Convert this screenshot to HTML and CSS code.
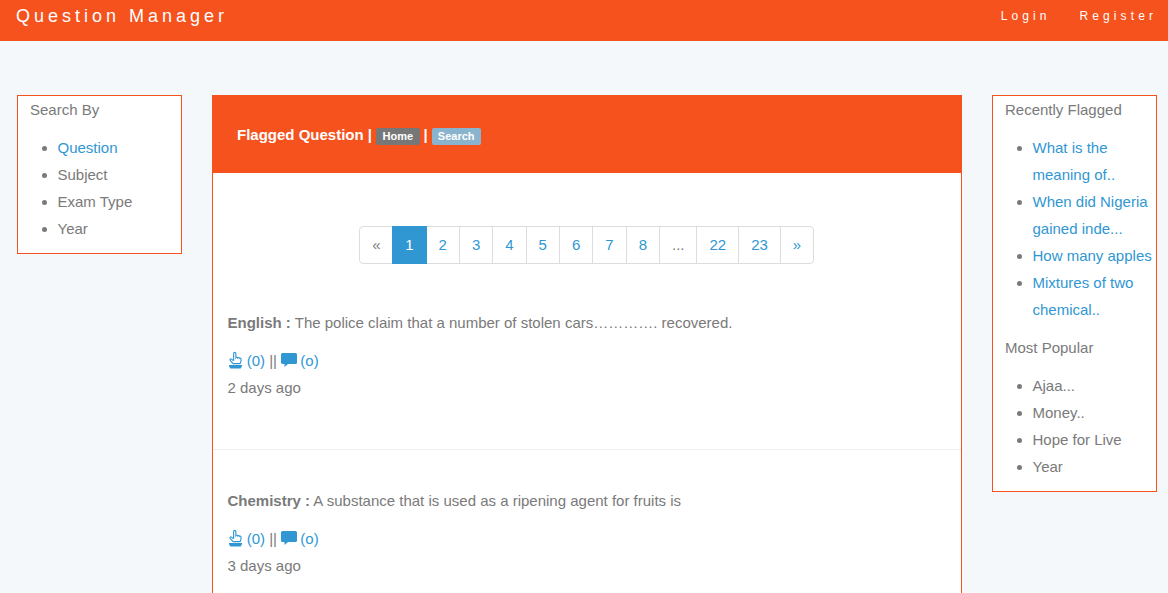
FILE: index.html
```html
<!DOCTYPE html>
<html lang="en">
<head>
<meta charset="utf-8">
<title>Question Manager</title>
<link rel="stylesheet" href="styles.css">
</head>
<body>
<header class="topbar">
  <a class="brand">Question Manager</a>
  <nav class="topnav"><a>Login</a><a>Register</a></nav>
</header>
<main class="layout">
  <aside class="box">
    <h4 class="box-title">Search By</h4>
    <ul class="box-list">
      <li><a>Question</a></li>
      <li>Subject</li>
      <li>Exam Type</li>
      <li>Year</li>
    </ul>
  </aside>
  <section class="panel">
    <div class="panel-head">
      <span class="panel-title">Flagged Question |</span>
      <span class="tag tag-home">Home</span>
      <span class="panel-title sep">|</span>
      <span class="tag tag-search">Search</span>
    </div>
    <div class="pager-row">
      <ul class="pager">
        <li class="muted">«</li><li class="active">1</li><li>2</li><li>3</li><li>4</li><li>5</li><li>6</li><li>7</li><li>8</li><li class="muted">...</li><li>22</li><li>23</li><li>»</li>
      </ul>
    </div>
    <article class="question">
      <p class="q-text"><b>English :</b> The police claim that a number of stolen cars…………. recovered.</p>
      <p class="q-meta">
        <svg class="ico-hand" viewBox="0 0 16 18"><path d="M6 9.500V2a1.200 1.200 0 0 1 2.400 0v4.600c.6-.8 1.800-.6 2 .2.6-.7 1.700-.4 1.900.4.700-.4 1.600 0 1.600 1v2l-1 2.600H5.500L2.300 9.400c-.8-1 .5-2.100 1.500-1.300L6 10" fill="none" stroke="currentColor" stroke-width="1.200"/><path d="M1 14.200h14v1.200L13.500 18h-11L1 15.400z" fill="currentColor"/></svg>
        <a>(0)</a> <span class="bars">||</span>
        <svg class="ico-chat" viewBox="0 0 16 14"><path d="M1.500 0h13A1.500 1.500 0 0 1 16 1.500v8a1.500 1.500 0 0 1-1.500 1.500H7L3.500 14V11h-2A1.500 1.500 0 0 1 0 9.500v-8A1.500 1.500 0 0 1 1.500 0z" fill="currentColor"/></svg>
        <a>(o)</a>
      </p>
      <p class="q-time">2 days ago</p>
    </article>
    <article class="question">
      <p class="q-text"><b>Chemistry :</b> A substance that is used as a ripening agent for fruits is</p>
      <p class="q-meta">
        <svg class="ico-hand" viewBox="0 0 16 18"><path d="M6 9.500V2a1.200 1.200 0 0 1 2.400 0v4.600c.6-.8 1.800-.6 2 .2.6-.7 1.700-.4 1.900.4.700-.4 1.600 0 1.600 1v2l-1 2.600H5.500L2.300 9.400c-.8-1 .5-2.100 1.500-1.300L6 10" fill="none" stroke="currentColor" stroke-width="1.200"/><path d="M1 14.200h14v1.200L13.500 18h-11L1 15.400z" fill="currentColor"/></svg>
        <a>(0)</a> <span class="bars">||</span>
        <svg class="ico-chat" viewBox="0 0 16 14"><path d="M1.500 0h13A1.500 1.500 0 0 1 16 1.500v8a1.500 1.500 0 0 1-1.500 1.500H7L3.500 14V11h-2A1.500 1.500 0 0 1 0 9.500v-8A1.500 1.500 0 0 1 1.500 0z" fill="currentColor"/></svg>
        <a>(o)</a>
      </p>
      <p class="q-time">3 days ago</p>
    </article>
  </section>
  <aside class="box">
    <h4 class="box-title">Recently Flagged</h4>
    <ul class="box-list">
      <li><a>What is the meaning of..</a></li>
      <li><a>When did Nigeria gained inde...</a></li>
      <li><a>How many apples</a></li>
      <li><a>Mixtures of two chemical..</a></li>
    </ul>
    <h4 class="box-title">Most Popular</h4>
    <ul class="box-list">
      <li>Ajaa...</li>
      <li>Money..</li>
      <li>Hope for Live</li>
      <li>Year</li>
    </ul>
  </aside>
</main>
</body>
</html>
```
FILE: styles.css
```css
* { box-sizing: border-box; }
html, body { height: 100%; overflow: hidden; }
body {
  margin: 0;
  background: #f5f8fa;
  color: #7a7a7a;
  font: 15px/27px "Liberation Sans", Arial, sans-serif;
}
a { color: #3097d3; }
.topbar {
  height: 41px;
  background: #f6521e;
  color: #fff;
  display: flex;
  justify-content: space-between;
  padding: 0 11px 0 16px;
}
.brand {
  color: #fff;
  font-size: 18px;
  line-height: 32px;
  letter-spacing: 4px;
}
.topnav {
  display: flex;
  gap: 29px;
  font-size: 12px;
  line-height: 32px;
  letter-spacing: 4.100px;
}
.topnav a { color: #fff; }
.layout {
  display: flex;
  align-items: flex-start;
  gap: 30px;
  padding: 54px 11px 0 17px;
}
.box {
  flex: 0 0 165px;
  width: 165px;
  background: #fff;
  border: 1px solid #f6521e;
  padding: 0 0 11px 12px;
}
.box-title {
  margin: 0;
  font-size: 15px;
  font-weight: 400;
  line-height: 27px;
}
.box-list {
  margin: 11px 0 11px;
  padding: 0 0 0 27.500px;
}
.box-list:last-child { margin-bottom: 0; }
.panel {
  flex: 0 0 750px;
  background: #fff;
  border: 1px solid #f6521e;
  border-top: 0;
}
.panel-head {
  height: 78px;
  background: #f6521e;
  padding: 0 24px;
  display: flex;
  align-items: center;
  color: #fff;
}
.panel-title { font-weight: 700; font-size: 15px; color: #fff; }
.sep { margin: 0 4px; }
.tag {
  font-size: 11px;
  font-weight: 700;
  line-height: 17px;
  height: 17px;
  padding: 0 6.500px;
  border-radius: 2px;
  color: #fff;
  margin-top: 4px;
}
.tag-home { background: #777; margin-left: 4px; }
.tag-search { background: #8ab4ce; padding: 0 6px; }
.pager-row {
  display: flex;
  justify-content: center;
  align-items: flex-start;
  padding: 53px 0.500px 0 0;
  height: 127px;
}
.pager {
  display: flex;
  margin: 0;
  padding: 0;
  list-style: none;
  line-height: 36px;
  color: #3097d3;
}
.pager li {
  height: 38px;
  padding: 0 12px;
  background: #fff;
  border: 1px solid #ddd;
  margin-left: -1px;
  text-align: center;
}
.pager li:first-child { margin-left: 0; padding-right: 11.600px; border-radius: 4px 0 0 4px; }
.pager li:last-child { border-radius: 0 4px 4px 0; }
.pager .muted { color: #7a7a7a; }
.pager .active { background: #3097d3; border-color: #3097d3; color: #fff; position: relative; }
.question {
  padding: 9px 14.500px 48px;
  border-bottom: 1px solid #eee;
}
.question + .question { padding-top: 37px; }
.q-text { margin: 0 0 11px; }
.q-meta, .q-time { margin: 0; }
.q-meta { color: #3097d3; }
.bars { color: #7a7a7a; }
.ico-hand { width: 15px; height: 18px; vertical-align: -3px; }
.ico-chat { width: 16px; height: 14px; vertical-align: -1px; margin-right: -1px; }
```
